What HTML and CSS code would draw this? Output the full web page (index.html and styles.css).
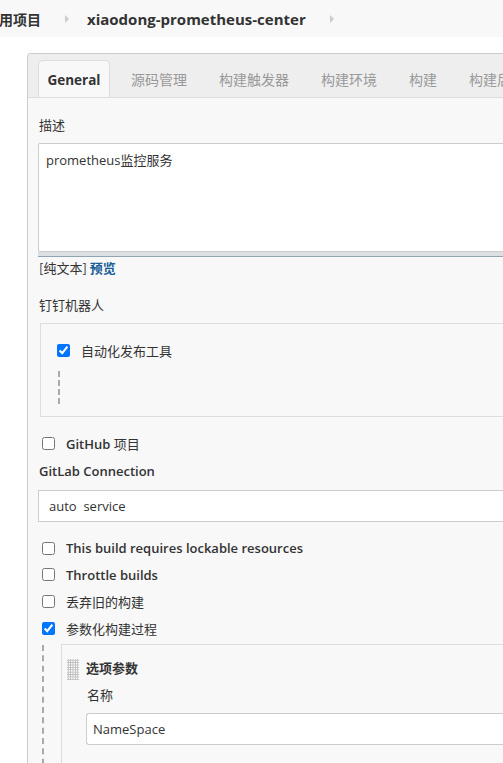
FILE: index.html
```html
<!DOCTYPE html>
<html lang="zh">
<head>
<meta charset="utf-8">
<link rel="stylesheet" href="styles.css">
</head>
<body>
<div class="crumbs">
  <span class="crumb first">应用项目</span>
  <span class="sep"></span>
  <span class="crumb">xiaodong-prometheus-center</span>
  <span class="sep"></span>
</div>
<div class="page">
  <div class="panel">
    <div class="tabs">
      <div class="tab active">General</div>
      <div class="tab first-inactive">源码管理</div>
      <div class="tab">构建触发器</div>
      <div class="tab">构建环境</div>
      <div class="tab">构建</div>
      <div class="tab">构建后操作</div>
    </div>
    <div class="content">
      <div class="label desc-label">描述</div>
      <div class="textarea">prometheus监控服务</div>
      <div class="grippie"></div>
      <div class="preview-row">[纯文本] <a class="preview">预览</a></div>
      <div class="label robot-label">钉钉机器人</div>
      <div class="robot-box">
        <div class="check-row inner"><input type="checkbox" checked><span class="cjk">自动化发布工具</span></div>
        <div class="dash short"></div>
      </div>
      <div class="check-row gh"><input type="checkbox"><span class="en">GitHub <span class="cjk">项目</span></span></div>
      <div class="label en gl-label">GitLab Connection</div>
      <div class="select">auto&nbsp; service</div>
      <div class="checks">
        <div class="check-row"><input type="checkbox"><span class="en">This build requires lockable resources</span></div>
        <div class="check-row"><input type="checkbox"><span class="en">Throttle builds</span></div>
        <div class="check-row"><input type="checkbox"><span class="cjk">丢弃旧的构建</span></div>
        <div class="check-row"><input type="checkbox" checked><span class="cjk">参数化构建过程</span></div>
      </div>
      <div class="nested">
        <div class="dash long"></div>
        <div class="param">
          <div class="param-head">
            <div class="handle"></div>
            <div class="param-title">选项参数</div>
          </div>
          <div class="param-body">
            <div class="label name-label">名称</div>
            <div class="input">NameSpace</div>
          </div>
        </div>
      </div>
    </div>
  </div>
</div>
</body>
</html>
```

FILE: styles.css
```css
html, body {
  margin: 0;
  padding: 0;
  background: #fff;
}
body {
  width: 503px;
  height: 763px;
  overflow: hidden;
  font-family: "Open Sans", "Noto Sans CJK SC", sans-serif;
  font-size: 13px;
  color: #333;
}
.cjk {
  font-family: "Noto Sans CJK SC", sans-serif;
  font-weight: 400;
  font-size: 13px;
}
.crumbs {
  height: 37px;
  background: #f8f8f8;
  display: flex;
  align-items: center;
  font-weight: 700;
  font-size: 15px;
  color: #333;
  white-space: nowrap;
  overflow: hidden;
}
.crumb.first {
  margin-left: -15px;
  font-family: "Noto Sans CJK SC", sans-serif;
  font-size: 14px;
}
.sep {
  width: 0;
  height: 0;
  border-top: 4px solid transparent;
  border-bottom: 4px solid transparent;
  border-left: 4px solid #ccc;
  margin: 0 18px 0 24px;
}
.page {
  padding: 16px 0 0 27px;
}
.panel {
  width: 560px;
  border: 1px solid #ccc;
  border-right: none;
  border-radius: 4px 0 0 0;
  background: #f8f8f8;
  height: 760px;
}
.tabs {
  height: 43px;
  background: #eee;
  border-bottom: 1px solid #ddd;
  border-radius: 4px 0 0 0;
  display: flex;
  align-items: flex-end;
  padding-left: 10px;
  white-space: nowrap;
  overflow: hidden;
}
.tab {
  height: 37px;
  display: flex;
  align-items: center;
  padding: 0 16px;
  font-family: "Noto Sans CJK SC", sans-serif;
  font-size: 14px;
  color: #999;
}
.tab.active {
  box-sizing: border-box;
  width: 72px;
  height: 38px;
  margin-bottom: -1px;
  padding: 0;
  justify-content: center;
  background: #f8f8f8;
  border: 1px solid #ddd;
  border-bottom: none;
  border-radius: 5px 5px 0 0;
  font-family: "Open Sans", sans-serif;
  font-weight: 700;
  font-size: 13.5px;
  color: #333;
}
.tab.first-inactive {
  margin-left: 5px;
}
.content {
  padding: 0 0 0 10px;
}
.label {
  font-family: "Noto Sans CJK SC", sans-serif;
  font-size: 13px;
  line-height: 20px;
  padding-left: 1px;
}
.label.en {
  font-family: "Open Sans", sans-serif;
  font-weight: 600;
}
.desc-label {
  margin-top: 17px;
}
.textarea {
  margin-top: 8px;
  box-sizing: border-box;
  height: 109px;
  background: #fff;
  border: 1px solid #ccc;
  border-radius: 2px 0 0 2px;
  border-right: none;
  padding: 6px 7px;
  font-family: "Open Sans", "Noto Sans CJK SC", sans-serif;
  font-size: 13px;
  line-height: 20px;
}
.grippie {
  height: 4px;
  background: #dde0e2;
  border-bottom: 1px solid #8fa3b0;
}
.preview-row {
  height: 20px;
  line-height: 20px;
  margin-top: 1px;
  padding-left: 1px;
  font-family: "Noto Sans CJK SC", sans-serif;
  font-size: 13px;
}
.preview {
  color: #1a5f96;
  font-weight: 700;
}
.robot-label {
  margin-top: 17px;
}
.robot-box {
  margin: 8px 0 0 2px;
  height: 94px;
  box-sizing: border-box;
  border: 1px solid #ddd;
  border-right: none;
  padding: 16px 0 0 16px;
}
.check-row {
  display: flex;
  align-items: center;
  height: 20px;
  padding-left: 4px;
  white-space: nowrap;
}
.check-row input {
  margin: 0 11px 0 0;
  width: 13px;
  height: 13px;
}
.check-row .en {
  font-family: "Open Sans", sans-serif;
  font-weight: 600;
  font-size: 13px;
}
.check-row .en .cjk {
  font-weight: 400;
}
.robot-box .check-row {
  padding-left: 0;
}
.dash {
  width: 0;
  border-left: 2px dashed #aaa;
}
.dash.short {
  height: 33px;
  margin: 11px 0 0 1px;
}
.check-row.gh {
  margin-top: 16px;
}
.gl-label {
  margin-top: 8px;
}
.select {
  margin-top: 9px;
  box-sizing: border-box;
  height: 32px;
  background: #fff;
  border: 1px solid #ccc;
  border-right: none;
  padding-left: 10px;
  line-height: 30px;
  font-family: "Open Sans", sans-serif;
  font-size: 13px;
}
.checks {
  margin-top: 16px;
  display: flex;
  flex-direction: column;
  gap: 6.7px;
}
.nested {
  display: flex;
  margin-top: 6px;
  padding-left: 4px;
}
.dash.long {
  height: 130px;
  margin-top: 1px;
}
.param {
  margin-left: 17px;
  flex: 1;
  border: 1px solid #ddd;
  border-right: none;
  height: 140px;
  box-sizing: border-box;
  padding: 13px 0 0 5px;
}
.param-head {
  display: flex;
  align-items: flex-start;
}
.handle {
  width: 12px;
  height: 21px;
  margin-top: 1px;
  background-image: radial-gradient(circle, #bbb 0.8px, transparent 1px);
  background-size: 2.4px 2.4px;
}
.param-title {
  margin-left: 7px;
  font-family: "Noto Sans CJK SC", sans-serif;
  font-weight: 700;
  font-size: 13px;
  line-height: 20px;
}
.param-body {
  padding-left: 19px;
}
.name-label {
  margin-top: 5px;
  padding-left: 1px;
}
.input {
  margin-top: 8px;
  box-sizing: border-box;
  height: 32px;
  background: #fff;
  border: 1px solid #ccc;
  border-right: none;
  border-radius: 3px 0 0 3px;
  padding-left: 6px;
  line-height: 30px;
  font-family: "Open Sans", sans-serif;
  font-size: 13px;
}
```
